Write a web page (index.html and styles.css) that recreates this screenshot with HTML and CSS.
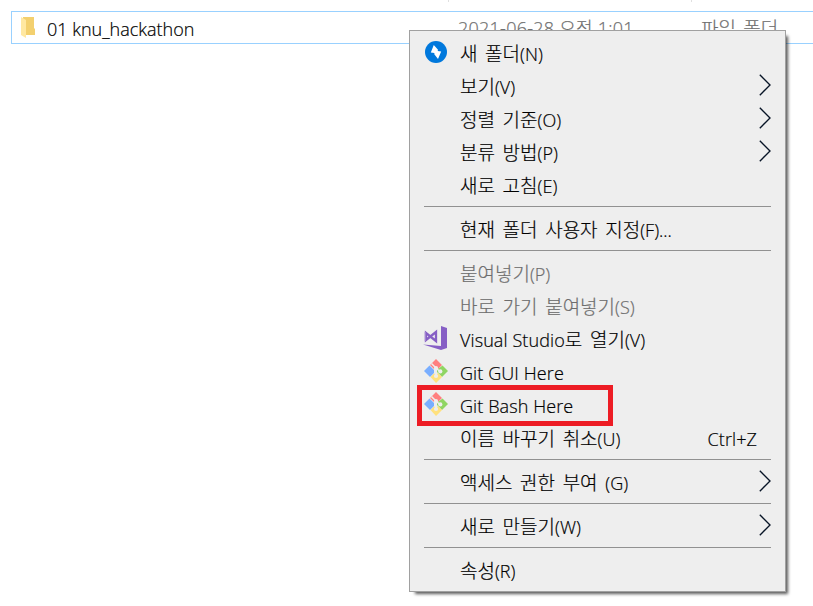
FILE: index.html
```html
<!DOCTYPE html>
<html lang="ko">
<head>
<meta charset="utf-8">
<title>Explorer</title>
<link rel="stylesheet" href="styles.css">
</head>
<body>
<svg class="defs" width="0" height="0">
  <symbol id="chevron" viewBox="0 0 12 22"><path d="M0.8 0.8L11 11L0.8 21.2" fill="none" stroke="#071426" stroke-width="1.35"/></symbol>
  <symbol id="git" viewBox="0 0 24 24">
    <path d="M6 6L12 0L18 6L14 10L12 8L10 10Z" fill="#ff7f7f"/>
    <path d="M5.5 6.5L10 11V14L6 18L0 12Z" fill="#79aeff"/>
    <path d="M18.5 6.5L24 12L18 18L13.5 13.5Q12 12 14 10Z" fill="#8fd563"/>
    <path d="M6.5 18L10 14.5L12 16L14 14L18 18L12 24Z" fill="#ffe17d"/>
    <path d="M7.5 4.5L12 9V17M12 9L16 12.5" fill="none" stroke="#eee" stroke-width="1.5"/>
    <circle cx="12" cy="9" r="2.1" fill="#eee"/><circle cx="12" cy="17" r="2.1" fill="#eee"/><circle cx="16.3" cy="12.4" r="2.1" fill="#eee"/>
  </symbol>
</svg>
<div class="columns"><i></i><i></i></div>
<div class="file">
  <svg class="folder" width="15" height="22" viewBox="0 0 15 22"><path d="M2 0H13V11L14 12V18H2Z" fill="#f3d06f"/><path d="M0 0L5 3V21L0 18Z" fill="#ffe8a2"/></svg>
  <span class="name">01 knu_hackathon</span>
  <span class="date">2021-06-28 오전 1:01</span>
  <span class="type">파일 폴더</span>
</div>
<div class="menu">
  <div class="item"><span class="icon"><svg class="bolt" width="22" height="22" viewBox="0 0 22 22"><circle cx="11" cy="11" r="11" fill="#0078dc"/><path d="M8.8 4L13 8.8L12.7 10L16.2 10.6L13 18L9.3 13.2L9.4 12L5.8 11.4Z" fill="#fff"/></svg></span><span class="label">새 폴더<b>(N)</b></span></div>
  <div class="item"><span class="icon"></span><span class="label">보기<b>(V)</b></span><svg class="arrow"><use href="#chevron"/></svg></div>
  <div class="item"><span class="icon"></span><span class="label">정렬 기준<b>(O)</b></span><svg class="arrow"><use href="#chevron"/></svg></div>
  <div class="item"><span class="icon"></span><span class="label">분류 방법<b>(P)</b></span><svg class="arrow"><use href="#chevron"/></svg></div>
  <div class="item"><span class="icon"></span><span class="label">새로 고침<b>(E)</b></span></div>
  <hr>
  <div class="item"><span class="icon"></span><span class="label">현재 폴더 사용자 지정<b>(F)...</b></span></div>
  <hr>
  <div class="item disabled"><span class="icon"></span><span class="label">붙여넣기<b>(P)</b></span></div>
  <div class="item disabled"><span class="icon"></span><span class="label">바로 가기 붙여넣기<b>(S)</b></span></div>
  <div class="item"><span class="icon"><svg class="vs" width="24" height="24" viewBox="0 0 24 24"><path d="M18 0L24 2V22L18 24L0 18.5L18 20Z" fill="#865fc5"/><path d="M3 7L13 15V6L3 14Z" fill="none" stroke="#865fc5" stroke-width="2.3"/><path d="M2 6V15" stroke="#b9a5dc" stroke-width="1"/></svg></span><span class="label"><em>Visual Studio</em>로 열기<b>(V)</b></span></div>
  <div class="item"><span class="icon"><svg class="git" width="24" height="24"><use href="#git"/></svg></span><span class="label"><em>Git GUI Here</em></span></div>
  <div class="item"><span class="icon"><svg class="git" width="24" height="24"><use href="#git"/></svg></span><span class="label"><em>Git Bash Here</em></span><span class="highlight"></span></div>
  <div class="item"><span class="icon"></span><span class="label">이름 바꾸기 취소<b>(U)</b></span><span class="shortcut">Ctrl+Z</span></div>
  <hr>
  <div class="item"><span class="icon"></span><span class="label">액세스 권한 부여 <b>(G)</b></span><svg class="arrow"><use href="#chevron"/></svg></div>
  <hr>
  <div class="item"><span class="icon"></span><span class="label">새로 만들기<b>(W)</b></span><svg class="arrow"><use href="#chevron"/></svg></div>
  <hr>
  <div class="item"><span class="icon"></span><span class="label">속성<b>(R)</b></span></div>
</div>
</body>
</html>
```
FILE: styles.css
```css
* { box-sizing: border-box; }
body { margin: 0; width: 813px; height: 606px; overflow: hidden; background: #fff; color: #000; font: 300 18px/33px "Open Sans", "Noto Sans CJK KR", sans-serif; -webkit-text-stroke: 0.2px currentColor; }
.defs { display: block; }
.columns { display: grid; grid-template-columns: 243px 243px; height: 11px; padding-left: 448px; }
.columns i { width: 1px; height: 2px; background: #e0e0e0; }
.file { display: grid; grid-template-columns: 26px 411px 243px 150px; width: 840px; height: 33px; margin-left: 11px; padding-left: 9px; border: 1px solid #99d1ff; white-space: nowrap; }
.folder { margin-top: 5px; }
.name { line-height: 35px; }
.date, .type { color: #6d6d6d; line-height: 33px; }
.date { letter-spacing: 0.25px; }
.type { font-family: "Noto Sans CJK KR", sans-serif; font-size: 19px; line-height: 31px; word-spacing: 2px; }
.menu { position: absolute; left: 409px; top: 30px; width: 377px; height: 562px; padding: 6px 14px; background: #eee; border: 1px solid #a0a0a0; box-shadow: 4px 4px 3px -2px rgba(0,0,0,.65); }
.item { display: flex; position: relative; height: 33px; white-space: nowrap; }
.icon { width: 36px; flex: none; }
.icon svg { display: block; }
.bolt { margin: 4px 0 0 1px; }
.vs { margin: 3px 0 0 -1px; }
.git { margin: 3px 0 0 -0.5px; }
.label { flex: 1; margin-top: -1px; font-family: "Noto Sans CJK KR", sans-serif; font-size: 19px; word-spacing: 2.3px; }
.label b, .label em { font: 300 18px/33px "Open Sans", sans-serif; word-spacing: 0; }
.label em { letter-spacing: 0.1px; }
.disabled { color: #6d6d6d; }
.arrow { width: 12px; height: 22px; margin-top: 4px; }
.shortcut { margin-right: 14px; line-height: 35px; letter-spacing: 0.1px; }
hr { height: 1px; margin: 4px 0 6px; border: 0; background: #919191; }
.highlight { position: absolute; left: -7px; top: -4px; width: 196px; height: 41px; border: 5px solid #ed1c24; }
```
